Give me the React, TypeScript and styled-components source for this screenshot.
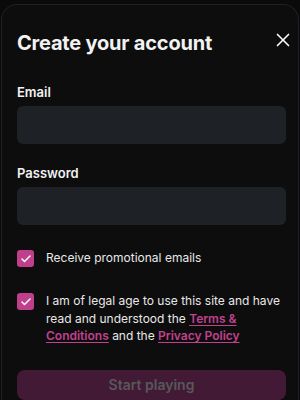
import styled, { createGlobalStyle } from 'styled-components';
import { Check, X } from 'lucide-react';

const GlobalStyle = createGlobalStyle`
  html, body {
    margin: 0;
    background: #0a0a0b;
    font-family: Inter, "Noto Sans", sans-serif;
    color: #f2f2f2;
  }
  * { box-sizing: border-box; }
`;

const Page = styled.div`
  height: 400px;
  overflow: hidden;
  padding: 4px 1px 0;
`;

const Card = styled.div`
  height: 100%;
  background: #0d0d0e;
  border: 1px solid #1f2127;
  border-bottom: none;
  border-radius: 16px 16px 0 0;
  padding: 26px 11px 0 15px;
  display: flex;
  flex-direction: column;
`;

const Header = styled.div`
  display: flex;
  justify-content: space-between;
  align-items: center;
  margin-bottom: 29px;
`;

const Title = styled.h1`
  margin: 0;
  font-size: 20px;
  font-weight: 700;
  letter-spacing: -0.2px;
`;

const CloseButton = styled.button`
  background: none;
  border: none;
  padding: 0;
  color: #fff;
  display: flex;
  margin-right: -7px;
  margin-top: -6px;
`;

const Field = styled.div`
  display: flex;
  flex-direction: column;
  gap: 6px;
  margin-bottom: 21px;
  margin-right: 1px;
`;

const Label = styled.label`
  font-size: 13px;
  font-weight: 600;
  line-height: 16px;
`;

const Input = styled.input`
  height: 38px;
  border: none;
  border-radius: 6px;
  background: #1e2226;
  outline: none;
  color: #fff;
  padding: 0 12px;
`;

const CheckRow = styled.label<{ $gap?: number }>`
  display: flex;
  gap: 12px;
  align-items: flex-start;
  margin-top: ${(p) => p.$gap ?? 0}px;
  font-size: 12px;
  line-height: 17.5px;
  color: #e8e8e8;
`;

const Box = styled.span`
  flex: none;
  width: 17px;
  height: 17px;
  margin-top: 1px;
  border-radius: 3px;
  background: #bf3f8d;
  display: flex;
  align-items: center;
  justify-content: center;
  color: #fff;
`;

const Link = styled.a`
  color: #c2418f;
  font-weight: 600;
  text-decoration: underline;
  text-underline-offset: 2px;
`;

const SubmitButton = styled.button`
  margin-top: 25px;
  margin-right: 1px;
  height: 40px;
  border: none;
  border-radius: 8px;
  background: #431a36;
  color: #585858;
  font-family: inherit;
  font-size: 14px;
  font-weight: 600;
`;

export default function App() {
  return (
    <Page>
      <GlobalStyle />
      <Card>
        <Header>
          <Title>Create your account</Title>
          <CloseButton>
            <X size={22} strokeWidth={1.8} />
          </CloseButton>
        </Header>
        <Field>
          <Label>Email</Label>
          <Input type="email" />
        </Field>
        <Field>
          <Label>Password</Label>
          <Input type="password" />
        </Field>
        <CheckRow $gap={3}>
          <Box>
            <Check size={12} strokeWidth={3} />
          </Box>
          <span>Receive promotional emails</span>
        </CheckRow>
        <CheckRow $gap={25}>
          <Box>
            <Check size={12} strokeWidth={3} />
          </Box>
          <span>
            I am of legal age to use this site and have read and understood the{' '}
            <Link>Terms &amp; Conditions</Link> and the <Link>Privacy Policy</Link>
          </span>
        </CheckRow>
        <SubmitButton disabled>Start playing</SubmitButton>
      </Card>
    </Page>
  );
}
